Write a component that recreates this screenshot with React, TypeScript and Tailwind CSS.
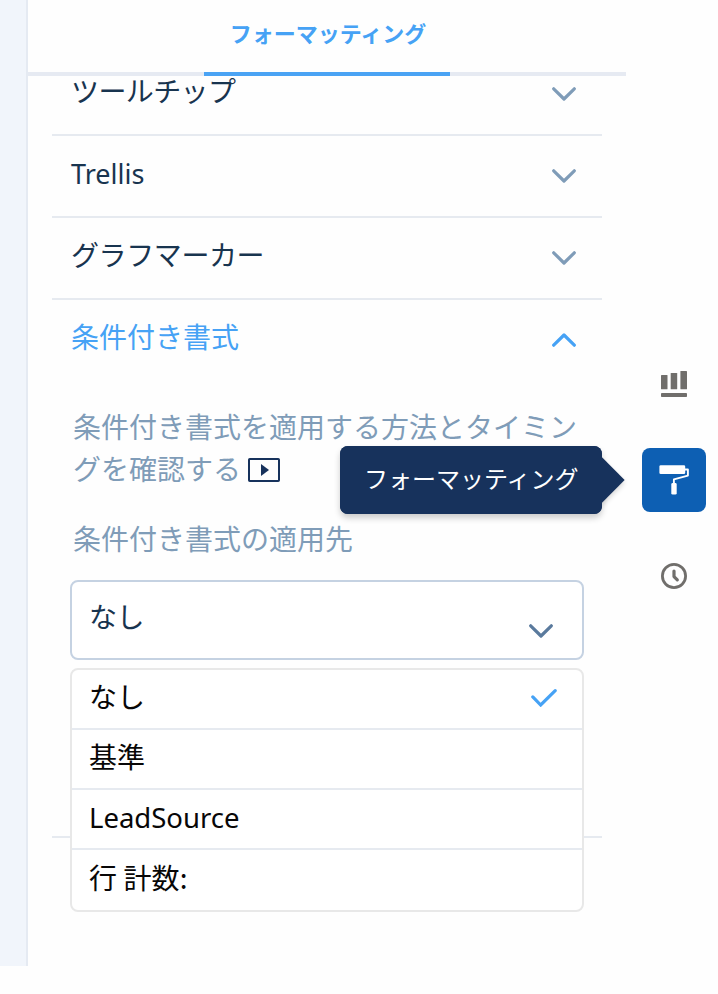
import { useState } from "react";
import clsx from "clsx";

// ─────────────────────────────────────────────
// DATA
// ─────────────────────────────────────────────

const OPTIONS = ["なし", "基準", "LeadSource", "行 計数:"];

// ─────────────────────────────────────────────
// ICONS
// ─────────────────────────────────────────────

function Chevron({ up = false, className }: { up?: boolean; className?: string }) {
  return (
    <svg
      viewBox="0 0 24 14"
      fill="none"
      stroke="currentColor"
      strokeWidth="3.2"
      strokeLinecap="round"
      strokeLinejoin="round"
      className={clsx("h-3.5 w-6 shrink-0", up && "rotate-180", className)}
    >
      <path d="M1.7 1.8 12 12 22.3 1.8" />
    </svg>
  );
}

function CheckIcon() {
  return (
    <svg
      viewBox="0 0 26 18"
      fill="none"
      stroke="currentColor"
      strokeWidth="3.2"
      strokeLinecap="round"
      className="mb-0.5 h-[18px] w-[26px] text-[#46a2f5]"
    >
      <path d="M1.8 7.9 9.7 16 24.2 1.7" />
    </svg>
  );
}

function VideoIcon() {
  return (
    <svg viewBox="0 0 32 24" className="ml-[7px] inline-block h-6 w-8 align-[-2px] text-[#17325c]">
      <rect x="1" y="1" width="30" height="22" rx="0.8" fill="none" stroke="currentColor" strokeWidth="2" />
      <path d="M13 6 21 12 13 18Z" fill="currentColor" />
    </svg>
  );
}

function ChartIcon() {
  return (
    <svg viewBox="0 0 26 26" fill="currentColor" className="size-[26px]">
      <rect x="0" y="4" width="6.5" height="14.3" rx="0.6" />
      <rect x="9.7" y="2" width="6.5" height="16.3" rx="0.6" />
      <rect x="19.4" y="0" width="6.6" height="18.3" rx="0.6" />
      <rect x="0" y="22" width="26" height="4" rx="0.8" />
    </svg>
  );
}

function RollerIcon() {
  return (
    <svg viewBox="0 0 30 30" className="size-[30px]" fill="currentColor">
      <rect x="0.4" y="0.3" width="25.8" height="8.8" rx="1.3" />
      <path
        d="M26 4.5H28.9V10.6L14.9 14.4V19"
        fill="none"
        stroke="currentColor"
        strokeWidth="1.9"
        strokeLinejoin="round"
      />
      <rect x="12.3" y="18" width="5.4" height="11.6" rx="1.4" />
    </svg>
  );
}

function ClockIcon() {
  return (
    <svg viewBox="0 0 26 26" className="size-[26px]" fill="none" stroke="currentColor">
      <circle cx="13" cy="13" r="11.6" strokeWidth="2.8" />
      <path d="M13 8V13.6L16.3 16.9" strokeWidth="3.2" strokeLinecap="round" strokeLinejoin="round" />
    </svg>
  );
}

// ─────────────────────────────────────────────
// ACCORDION ROW
// ─────────────────────────────────────────────

function SectionRow({ title, titleClass }: { title: string; titleClass: string }) {
  return (
    <button className="flex h-[82px] w-full shrink-0 items-center justify-between border-b-2 border-[#e6eaf0] pr-[26px] pl-[19px] text-left">
      <span className={clsx("leading-[42px]", titleClass)}>{title}</span>
      <Chevron className="text-[#7f9cb8]" />
    </button>
  );
}

// ─────────────────────────────────────────────
// MAIN
// ─────────────────────────────────────────────

export default function App() {
  const [selected, setSelected] = useState("なし");

  return (
    <div className="flex h-[994px] w-[718px] items-start overflow-hidden bg-[#fefefe] font-['Noto_Sans_CJK_JP',sans-serif] text-[28px] text-[#18344f]">
      <div className="h-[966px] w-7 shrink-0 border-r-2 border-[#e5eaf2] bg-[#f1f5fb]" />

      {/* Panel */}
      <div className="w-[598px] shrink-0">
        <div className="flex h-[76px] justify-center border-b-4 border-[#e6eaf2]">
          <div className="flex h-[76px] w-[246px] items-start justify-center border-b-4 border-[#4aa3f4] pt-4 pl-0.5 text-[22px] leading-8 font-bold text-[#46a2f5]">
            フォーマッティング
          </div>
        </div>

        <div className="px-6">
          {/* First row is scrolled under the tab bar */}
          <div className="flex h-[60px] flex-col justify-end overflow-hidden">
            <SectionRow title="ツールチップ" titleClass="pb-2 tracking-[-0.6px]" />
          </div>
          <SectionRow
            title="Trellis"
            titleClass="pb-1 font-['Noto_Sans',sans-serif] text-[27px]"
          />
          <SectionRow title="グラフマーカー" titleClass="pb-2 tracking-[-0.4px]" />

          <div className="h-[538px] border-b-2 border-[#e6eaf0]">
            <button className="flex h-20 w-full items-center justify-between pr-[26px] pl-[19px] text-[#46a2f5]">
              <span className="pb-2 leading-[42px]">条件付き書式</span>
              <Chevron up />
            </button>

            <div className="pt-[25px] pr-[18px] pl-[21px] leading-[42px] text-[#7f9cb8]">
              <p className="w-[508px]">
                条件付き書式を適用する方法とタイミングを確認する
                <VideoIcon />
              </p>
              <p className="mt-7">条件付き書式の適用先</p>
            </div>

            <div className="relative mt-[21px] ml-[18px] w-[514px]">
              <button className="flex h-20 w-full items-center justify-between rounded-lg border-2 border-[#c5d2e2] bg-white pr-[29px] pl-[17px]">
                <span className="pb-2 tracking-[-0.5px]">{selected}</span>
                <Chevron className="mt-[22px] text-[#5a7a9d]" />
              </button>

              <ul className="absolute top-[88px] left-0 w-full overflow-hidden rounded-lg border-2 border-[#e8e8e8] bg-white text-[#080707]">
                {OPTIONS.map((option) => (
                  <li
                    key={option}
                    onClick={() => setSelected(option)}
                    className="flex h-[60px] items-center justify-between border-b-2 border-[#e6eaf0] pr-[25px] pl-[17px] last:border-b-0"
                  >
                    <span
                      className={
                        option === "LeadSource"
                          ? "pb-0.5 font-['Noto_Sans',sans-serif] text-[27.5px]"
                          : "pb-1.5 last:tracking-[0.1px]"
                      }
                    >
                      {option}
                    </span>
                    {option === selected && <CheckIcon />}
                  </li>
                ))}
              </ul>
            </div>
          </div>
        </div>
      </div>

      {/* Right rail */}
      <div className="flex w-[92px] shrink-0 flex-col items-center gap-8 pt-[352px] pl-1 text-[#706e6b]">
        <button className="flex size-16 items-center justify-center">
          <ChartIcon />
        </button>
        <div className="relative">
          <button className="flex size-16 items-center justify-center rounded-lg bg-[#0d5fb3] text-white">
            <RollerIcon />
          </button>
          <div
            role="tooltip"
            className="absolute top-[-2px] right-[104px] h-[68px] w-[262px] rounded-lg bg-[#17325c] text-white shadow-[0_4px_6px_rgba(0,0,0,0.2)]"
          >
            <div className="absolute top-[18px] right-[-16px] size-8 rotate-45 bg-[#17325c] shadow-[2px_2px_5px_rgba(0,0,0,0.16)]" />
            <div className="relative flex h-full items-center rounded-lg bg-[#17325c] pb-1 pl-[24px] text-[24px] whitespace-nowrap">
              フォーマッティング
            </div>
          </div>
        </div>
        <button className="flex size-16 items-center justify-center">
          <ClockIcon />
        </button>
      </div>
    </div>
  );
}
